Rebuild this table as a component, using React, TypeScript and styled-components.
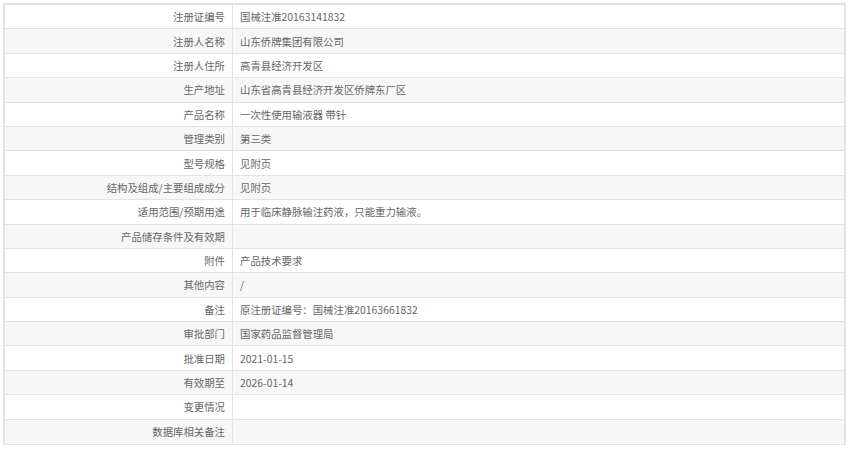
import React from "react";
import styled, { createGlobalStyle } from "styled-components";

const Global = createGlobalStyle`
  html, body { margin: 0; padding: 0; background: #fff; }
  body { padding: 3px 0 0 3px; font-family: "Noto Sans CJK SC", "Microsoft YaHei", sans-serif; }
`;

const Table = styled.div`
  width: 843px;
  box-sizing: border-box;
  border: 2px solid #e3e3e3;
  border-bottom-width: 1px;
  display: flex;
  flex-direction: column;
`;

const Row = styled.div<{ $alt: boolean }>`
  display: grid;
  grid-template-columns: 228px 1fr;
  height: 24.4px;
  box-sizing: border-box;
  border-bottom: 1px solid #e3e3e3;
  background: ${(p) => (p.$alt ? "#f7f7f7" : "#ffffff")};
  &:last-child { border-bottom: none; }
`;

const Label = styled.div`
  border-right: 1px solid #e3e3e3;
  text-align: right;
  padding-right: 7px;
  font-size: 10.4px;
  color: #666;
  display: flex;
  align-items: center;
  justify-content: flex-end;
  white-space: nowrap;
`;

const Value = styled.div`
  padding-left: 7px;
  font-size: 10.4px;
  color: #666;
  display: flex;
  align-items: center;
  white-space: nowrap;
`;

const rows: [string, string][] = [
  ["注册证编号", "国械注准20163141832"],
  ["注册人名称", "山东侨牌集团有限公司"],
  ["注册人住所", "高青县经济开发区"],
  ["生产地址", "山东省高青县经济开发区侨牌东厂区"],
  ["产品名称", "一次性使用输液器 带针"],
  ["管理类别", "第三类"],
  ["型号规格", "见附页"],
  ["结构及组成/主要组成成分", "见附页"],
  ["适用范围/预期用途", "用于临床静脉输注药液，只能重力输液。"],
  ["产品储存条件及有效期", ""],
  ["附件", "产品技术要求"],
  ["其他内容", "/"],
  ["备注", "原注册证编号：国械注准20163661832"],
  ["审批部门", "国家药品监督管理局"],
  ["批准日期", "2021-01-15"],
  ["有效期至", "2026-01-14"],
  ["变更情况", ""],
  ["数据库相关备注", ""],
];

export default function App() {
  return (
    <>
      <Global />
      <Table>
        {rows.map(([k, v], i) => (
          <Row key={k} $alt={i % 2 === 1}>
            <Label>{k}</Label>
            <Value>{v}</Value>
          </Row>
        ))}
      </Table>
    </>
  );
}
